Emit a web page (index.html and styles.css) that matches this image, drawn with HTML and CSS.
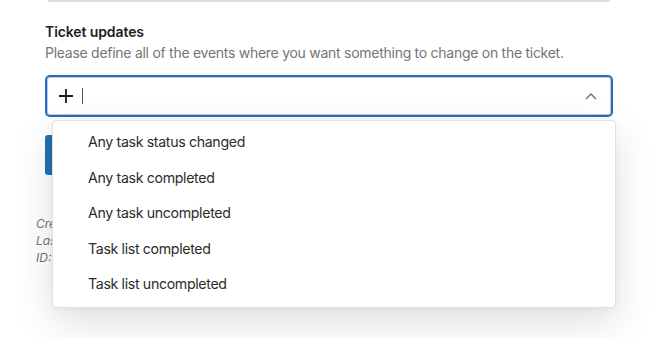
FILE: index.html
```html
<!DOCTYPE html>
<html lang="en">
<head>
<meta charset="utf-8">
<title>Ticket updates</title>
<link rel="stylesheet" href="styles.css">
</head>
<body>
<div class="page">
  <div class="prev-box"></div>
  <div class="field">
    <h2 class="field-title">Ticket updates</h2>
    <p class="field-help">Please define all of the events where you want something to change on the ticket.</p>
    <div class="combo">
      <div class="combo-input">
        <svg class="plus" width="14" height="14" viewBox="0 0 14 14"><path d="M7 0v14M0 7h14" stroke="#1e1e1e" stroke-width="1.8" fill="none"/></svg>
        <span class="caret"></span>
        <svg class="chevron" width="12" height="7" viewBox="0 0 12 7"><path d="M1 6l5-5 5 5" stroke="#757575" stroke-width="1.5" fill="none"/></svg>
      </div>
      <ul class="menu">
        <li class="menu-item">Any task status changed</li>
        <li class="menu-item">Any task completed</li>
        <li class="menu-item">Any task uncompleted</li>
        <li class="menu-item">Task list completed</li>
        <li class="menu-item">Task list uncompleted</li>
      </ul>
    </div>
    <div class="save-btn"></div>
  </div>
  <div class="meta">
    <div class="meta-line">Created: 2 days ago</div>
    <div class="meta-line">Last updated: 1 hour ago</div>
    <div class="meta-line">ID: 1042</div>
  </div>
</div>
</body>
</html>
```
FILE: styles.css
```css
html, body {
  margin: 0;
  padding: 0;
  background: #fff;
}
body {
  font-family: Inter, "Noto Sans", sans-serif;
  color: #1e1e1e;
  overflow: hidden;
  height: 338px;
}
.page {
  padding-left: 36px;
  width: 590px;
}
.prev-box {
  margin-left: 12px;
  width: 562px;
  height: 2px;
  background: #dcdcde;
  border-radius: 0 0 2px 2px;
}
.field {
  margin-left: 9px;
  margin-top: 20px;
}
.field-title {
  margin: 0;
  font-size: 14px;
  font-weight: 600;
  line-height: 20px;
  letter-spacing: -0.1px;
  color: #1e1e1e;
}
.field-help {
  margin: 1px 0 0;
  font-size: 14px;
  line-height: 20px;
  letter-spacing: -0.27px;
  color: #757575;
}
.combo {
  position: relative;
  margin-top: 12px;
  width: 568px;
}
.combo-input {
  box-sizing: border-box;
  height: 42px;
  border: 2px solid #2271b1;
  border-radius: 5px;
  box-shadow: inset 0 0 0 1px rgba(120, 120, 230, 0.45);
  display: flex;
  align-items: center;
  padding: 0 14px 0 12px;
}
.plus {
  flex: none;
}
.caret {
  width: 1px;
  height: 16px;
  background: #555;
  margin-left: 9px;
}
.chevron {
  margin-left: auto;
}
.menu {
  position: absolute;
  top: 45px;
  left: 7px;
  width: 564px;
  box-sizing: border-box;
  margin: 0;
  padding: 3px 0 5px;
  list-style: none;
  background: #fff;
  border: 1px solid #e0e0e0;
  border-radius: 4px;
  box-shadow: 0 14px 40px rgba(0, 0, 0, 0.13), 0 2px 6px rgba(0, 0, 0, 0.04);
  z-index: 2;
}
.menu-item {
  height: 35.5px;
  line-height: 35.5px;
  padding-left: 35px;
  font-size: 14.2px;
  letter-spacing: -0.35px;
  color: #2c2c2c;
}
.save-btn {
  margin-top: 18px;
  width: 80px;
  height: 40px;
  background: #2271b1;
  border-radius: 3px;
}
.meta {
  margin-top: 40px;
  font-size: 12px;
  font-style: italic;
  line-height: 17px;
  color: #757575;
}
.meta-line {
  white-space: nowrap;
}
```
